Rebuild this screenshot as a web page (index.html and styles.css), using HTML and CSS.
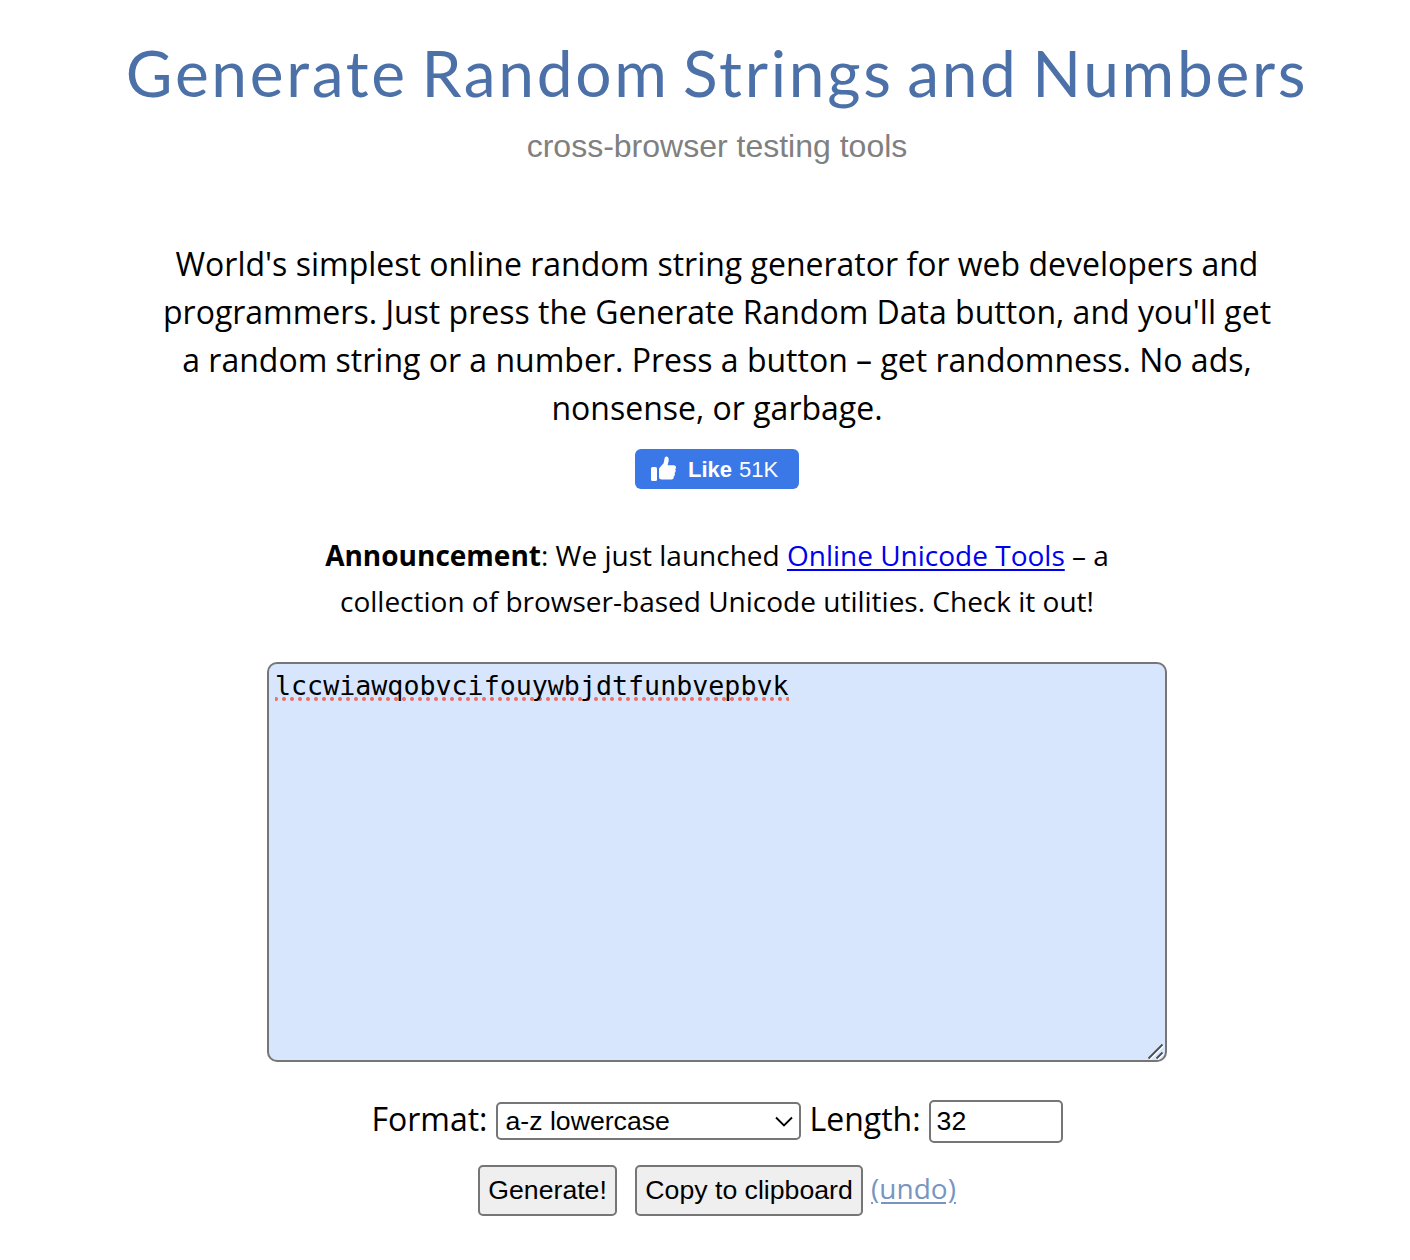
FILE: index.html
```html
<!DOCTYPE html>
<html lang="en">
<head>
<meta charset="UTF-8" />
<meta name="viewport" content="width=device-width, initial-scale=1" />
<title>Generate Random Strings and Numbers</title>
<link rel="stylesheet" href="styles.css">
</head>
<body>
<div class="container">
  <header>
    <h1>Generate Random Strings and Numbers</h1>
    <div class="subtitle">cross-browser testing tools</div>
  </header>

  <p class="intro">World's simplest online random string generator for web developers and programmers. Just press the Generate Random Data button, and you'll get a random string or a number. Press a button – get randomness. No ads, nonsense, or garbage.</p>

  <button class="like">
    <svg width="26" height="26" viewBox="0 0 26 26" fill="#fff">
      <rect x="0" y="11" width="6" height="14" rx="1.5" />
      <path d="M8 12.5 L12.6 7.2 L13.6 2.2 Q14 .3 15.6 .6 Q18.3 1.4 17.6 5 L16.6 9.2 H23 Q25.2 9.5 25 11.4 Q24.9 12.7 24.2 13.3 Q25 14.2 24.6 15.6 Q24.3 16.6 23.6 17 Q24.2 18 23.7 19.2 Q23.4 20 22.7 20.4 Q23 23.3 20.3 23.5 H11 Q8 23.5 8 21 Z" />
    </svg>
    <b>Like</b>
    <span>51K</span>
  </button>

  <p class="announcement"><b>Announcement</b>: We just launched <a href="#">Online Unicode Tools</a> – a collection of browser-based Unicode utilities. Check it out!</p>

  <div class="output" contenteditable="true" spellcheck="false">
    <span class="misspelled">lccwiawqobvcifouywbjdtfunbvepbvk</span>
    <svg class="grip" width="18" height="18" viewBox="0 0 18 18" fill="none" stroke-width="1.8">
      <path d="M2.5 17.5 L16.5 3.5 M10.5 17.5 L16.5 11.5" stroke="#fff" />
      <path d="M1.5 16.5 L15.5 2.5 M9.5 16.5 L15.5 10.5" stroke="#4a4d52" />
    </svg>
  </div>

  <div class="options">
    <label for="format">Format:</label>
    <div class="select">
      <select id="format">
        <option>a-z lowercase</option>
      </select>
      <svg class="arrow" width="18" height="12" viewBox="0 0 18 12" fill="none" stroke="#000" stroke-width="1.8">
        <path d="M1 1.5 L9 9.5 L17 1.5" />
      </svg>
    </div>
    <label for="length">Length:</label>
    <input type="text" id="length" value="32" />
  </div>

  <div class="actions">
    <button class="generate">Generate!</button>
    <button class="copy">Copy to clipboard</button>
    <a href="#" class="undo">(undo)</a>
  </div>
</div>
</body>
</html>
```
FILE: styles.css
```css
* {
  margin: 0;
  padding: 0;
  box-sizing: border-box;
}
body {
  background: #fff;
  color: #000;
  font-family: 'Open Sans', sans-serif;
  font-size: 32px;
  line-height: 48px;
}
.container {
  display: flex;
  flex-direction: column;
  align-items: center;
  padding: 33px 0 0 24px;
}
header {
  text-align: center;
}
h1 {
  font-family: Lato, sans-serif;
  font-size: 64px;
  font-weight: 400;
  line-height: 80px;
  letter-spacing: 2.7px;
  word-spacing: -5.5px;
  color: #4c71a9;
  white-space: nowrap;
}
.subtitle {
  margin-top: 13px;
  font-family: 'Liberation Sans', sans-serif;
  line-height: 40px;
  color: #808080;
}
.intro {
  width: 1120px;
  margin-top: 74px;
  text-align: center;
}
.like {
  display: flex;
  align-items: center;
  width: 164px;
  height: 40px;
  margin-top: 17px;
  padding-left: 16px;
  border: none;
  border-radius: 6px;
  background: #3b78e7;
  color: #fff;
  font-family: 'Liberation Sans', sans-serif;
  font-size: 22px;
}
.like b,
.like span {
  padding-top: 2px;
}
.like b {
  margin: 0 7px 0 11px;
}
.announcement {
  width: 800px;
  margin-top: 43px;
  font-size: 28px;
  line-height: 46px;
  text-align: center;
}
a {
  color: #0000ee;
  text-underline-offset: 3px;
}
.output {
  position: relative;
  width: 900px;
  height: 400px;
  margin-top: 38px;
  padding: 4px 6px;
  border: 2px solid #767676;
  border-radius: 10px;
  background: #d8e6fd;
  font-family: 'DejaVu Sans Mono', monospace;
  font-size: 26.67px;
  line-height: 36px;
}
.misspelled {
  display: inline-block;
  background: radial-gradient(circle at 4px 2px, #e9766e 1.7px, transparent 2.3px) -3px 29px / 8px 4px repeat-x;
}
.grip {
  position: absolute;
  right: 0;
  bottom: 0;
}
.options {
  display: flex;
  align-items: center;
  height: 43px;
  margin-top: 38px;
}
.options label {
  margin-top: -6px;
}
.select {
  position: relative;
  display: flex;
  margin: -2px 8px 0 9px;
}
select,
input,
.actions button {
  border: 2px solid #767676;
  border-radius: 5px;
  color: #000;
  font-family: 'Liberation Sans', sans-serif;
  font-size: 26.67px;
}
select {
  width: 305px;
  height: 38px;
  padding-left: 7px;
  background: #fff;
  appearance: none;
}
.arrow {
  position: absolute;
  top: 14px;
  right: 8px;
}
input {
  width: 134px;
  height: 43px;
  margin-left: 8px;
  padding: 0 6px;
  background: #fff;
}
.actions {
  display: flex;
  align-items: center;
  margin-top: 22px;
}
.actions button {
  height: 51px;
  background: #efefef;
}
.generate {
  width: 139px;
  margin-right: 18px;
}
.copy {
  width: 228px;
  margin-right: 8px;
}
.undo {
  margin-top: -5px;
  color: #7895c1;
  font-size: 28px;
}
```
